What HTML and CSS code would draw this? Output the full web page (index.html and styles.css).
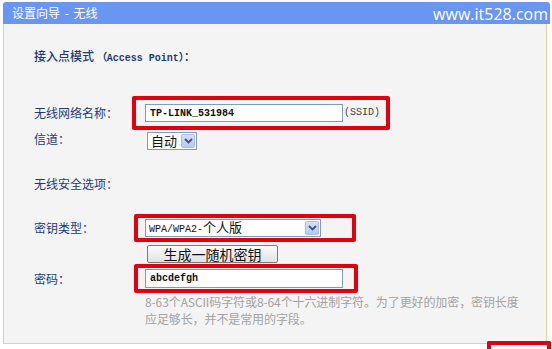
FILE: index.html
```html
<!DOCTYPE html>
<html lang="zh-CN">
<head>
  <meta charset="UTF-8">
  <title>设置向导 - 无线</title>
  <link rel="stylesheet" href="styles.css">
</head>
<body>
  <div class="header">
    <span class="header-title">设置向导 - 无线</span>
    <span class="site">www.it528.com</span>
  </div>

  <div class="panel">
    <div class="title">接入点模式 <span class="mono strong">（Access Point）</span>：</div>

    <div class="row row-ssid">
      <span class="label">无线网络名称：</span>
      <div class="mark mark-ssid">
        <div class="input"><span class="mono">TP-LINK_531984</span></div>
        <span class="mono suffix">(SSID)</span>
      </div>
    </div>

    <div class="row row-channel">
      <span class="label">信道：</span>
      <div class="select select-small">
        <span class="select-text">自动</span>
        <span class="arrow">
          <svg width="9" height="6" viewBox="0 0 9 6"><path d="M1 1 L4.5 4.5 L8 1" fill="none" stroke="#3d5487" stroke-width="1.8"/></svg>
        </span>
      </div>
    </div>

    <div class="section">无线安全选项：</div>

    <div class="row row-key">
      <span class="label">密钥类型：</span>
      <div class="mark mark-key">
        <div class="select select-wide">
          <span class="select-text"><span class="mono">WPA/WPA2-</span>个人版</span>
          <span class="arrow">
            <svg width="9" height="6" viewBox="0 0 9 6"><path d="M1 1 L4.5 4.5 L8 1" fill="none" stroke="#3d5487" stroke-width="1.8"/></svg>
          </span>
        </div>
      </div>
    </div>

    <button class="gen-btn" type="button">生成一随机密钥</button>

    <div class="row row-pwd">
      <span class="label">密码：</span>
      <div class="mark mark-pwd">
        <div class="input input-pwd"><span class="mono">abcdefgh</span></div>
      </div>
    </div>

    <div class="hint">8-63个ASCII码字符或8-64个十六进制字符。为了更好的加密，密钥长度<br>应足够长，并不是常用的字段。</div>
  </div>

  <div class="mark-corner"></div>
</body>
</html>
```

FILE: styles.css
```css
html {
  overflow: hidden;
}

body {
  margin: 0;
  width: 552px;
  height: 349px;
  overflow: hidden;
  background: #ffffff;
  font-family: "Noto Sans CJK SC", "Liberation Sans", sans-serif;
  font-size: 12px;
}

.header {
  margin: 2px 2px 0 3px;
  height: 22px;
  padding: 0 2px 0 9px;
  background: #6996f1;
  border-radius: 3px 3px 0 0;
  color: #ffffff;
  display: flex;
  align-items: center;
  justify-content: space-between;
}

.header-title {
  font-size: 12px;
  line-height: 22px;
  word-spacing: 2px;
}

.site {
  font-family: "Open Sans", "Liberation Sans", sans-serif;
  font-size: 16px;
  line-height: 22px;
  margin-top: 1px;
}

.panel {
  margin: 0 5px 0 3px;
  height: 295px;
  padding: 24px 0 0 30px;
  background: #f4f4f4;
  border: 1px solid #e9cf9f;
  border-top: 0;
  color: #1e3b78;
}

.mono {
  font-family: "Liberation Mono", "DejaVu Sans Mono", monospace;
  font-size: 10px;
}

.strong {
  font-weight: bold;
}

.title {
  line-height: 16px;
  font-weight: 500;
}

.row {
  display: flex;
  align-items: center;
}

.label {
  width: 98px;
  flex: none;
  line-height: 16px;
}

.row-ssid {
  margin-top: 29px;
}

.row-channel {
  margin-top: 2px;
}

.row-channel .label {
  margin-top: -4px;
}

.section {
  margin-top: 26px;
  line-height: 16px;
}

.row-key {
  margin-top: 22px;
}

.row-pwd {
  margin-top: 1px;
}

.mark {
  border: 4px solid #e0000e;
  border-radius: 2px;
  display: flex;
  align-items: center;
}

.mark-ssid {
  padding: 4px 6px 0 9px;
  height: 22px;
  align-items: flex-start;
}

.mark-key {
  margin-left: 2px;
  padding: 1px 31px 0 7px;
  height: 19px;
  align-items: flex-start;
}

.mark-pwd {
  margin-left: 2px;
  padding: 1px 11px 1px 7px;
  height: 19px;
}

.input {
  width: 192px;
  height: 16px;
  padding-left: 4px;
  background: #ffffff;
  border: 1px solid #7f9db9;
  display: flex;
  align-items: center;
  color: #111111;
}

.input .mono {
  font-weight: bold;
}

.input-pwd {
  height: 17px;
}

.suffix {
  color: #444444;
  margin: 1px 0 0 1px;
  line-height: 16px;
}

.select {
  height: 16px;
  background: #ffffff;
  border: 1px solid #7f9db9;
  display: flex;
  align-items: center;
  justify-content: space-between;
  color: #111111;
}

.select-small {
  margin-left: 15px;
  width: 48px;
  font-size: 13px;
}

.select-wide {
  width: 174px;
  font-size: 13px;
}

.select-text {
  padding-left: 3px;
  line-height: 16px;
  white-space: nowrap;
}

.arrow {
  width: 14px;
  height: 14px;
  margin-right: 1px;
  background: linear-gradient(#d3e0fb, #b6caf4);
  border: 1px solid #a9bde6;
  border-radius: 2px;
  display: flex;
  align-items: center;
  justify-content: center;
  box-sizing: border-box;
}

.gen-btn {
  display: block;
  margin: 3px 0 0 113px;
  width: 131px;
  height: 18px;
  padding: 0;
  font-family: "Noto Sans CJK SC", sans-serif;
  font-size: 14px;
  line-height: 16px;
  color: #111111;
  background: linear-gradient(#fbfbfb, #e2e2e2);
  border: 1px solid #7a7a7a;
  border-radius: 2px;
}

.hint {
  margin-left: 111px;
  line-height: 17px;
  color: #a3a3a3;
  letter-spacing: -0.1px;
}

.mark-corner {
  margin: -3px 0 0 487px;
  width: 56px;
  height: 4px;
  border: 4px solid #e0000e;
  border-bottom: 0;
  border-radius: 2px 2px 0 0;
}
```
